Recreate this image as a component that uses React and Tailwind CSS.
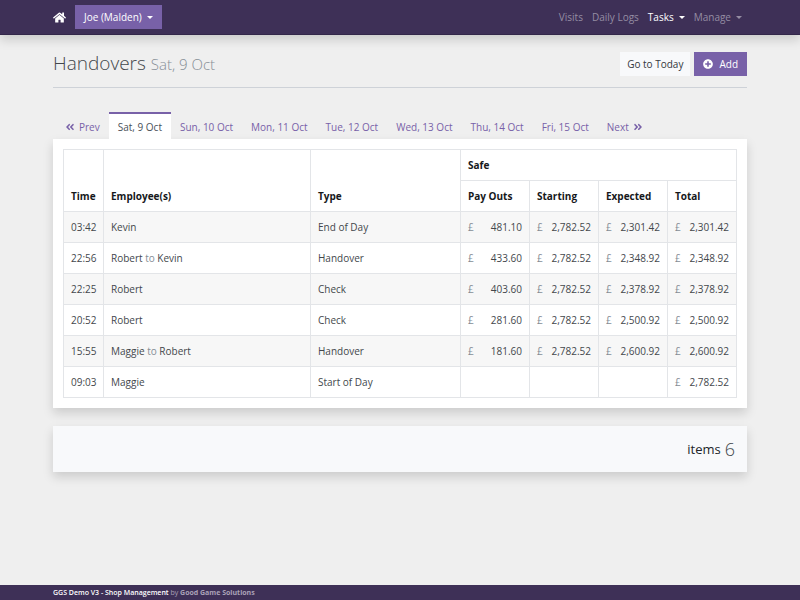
import React from 'react';
import { FaAngleDoubleLeft, FaAngleDoubleRight, FaHome, FaPlusCircle } from 'react-icons/fa';

const days = ['Sat, 9 Oct', 'Sun, 10 Oct', 'Mon, 11 Oct', 'Tue, 12 Oct', 'Wed, 13 Oct', 'Thu, 14 Oct', 'Fri, 15 Oct'];

const handovers = [
  { time: '03:42', from: 'Kevin', type: 'End of Day', safe: ['481.10', '2,782.52', '2,301.42', '2,301.42'] },
  { time: '22:56', from: 'Robert', to: 'Kevin', type: 'Handover', safe: ['433.60', '2,782.52', '2,348.92', '2,348.92'] },
  { time: '22:25', from: 'Robert', type: 'Check', safe: ['403.60', '2,782.52', '2,378.92', '2,378.92'] },
  { time: '20:52', from: 'Robert', type: 'Check', safe: ['281.60', '2,782.52', '2,500.92', '2,500.92'] },
  { time: '15:55', from: 'Maggie', to: 'Robert', type: 'Handover', safe: ['181.60', '2,782.52', '2,600.92', '2,600.92'] },
  { time: '09:03', from: 'Maggie', type: 'Start of Day', safe: [null, null, null, '2,782.52'] },
];

const container = 'mx-auto w-full max-w-[694px]';
const cell = 'border border-[#e3e5e8] px-[7px]';

function Caret() {
  return (
    <svg className="h-[3px] w-[6px]" viewBox="0 0 6 3" fill="currentColor" aria-hidden="true">
      <path d="M0 0h6L3 3z" />
    </svg>
  );
}

function Navbar() {
  return (
    <header className="relative border-b border-[#33274a] bg-[#3e3057] shadow-[0_5px_10px_rgba(0,0,0,0.15)]">
      <nav className={`${container} flex h-[34px] items-center justify-between`}>
        <div className="flex items-center gap-[9px]">
          <a href="#home" aria-label="Home" className="text-white">
            <FaHome className="size-[13px]" />
          </a>
          <button type="button" className="flex h-6 items-center gap-[5px] bg-[#7861a8] px-[9px] text-white">
            Joe (Malden)
            <Caret />
          </button>
        </div>
        <div className="flex items-center gap-[9px] pr-[5px] text-[#958da3]">
          <a href="#visits">Visits</a>
          <a href="#logs">Daily Logs</a>
          <button type="button" className="flex items-center gap-[5px] font-medium text-white">
            Tasks
            <Caret />
          </button>
          <button type="button" className="flex items-center gap-[5px]">
            Manage
            <Caret />
          </button>
        </div>
      </nav>
    </header>
  );
}

function DayTabs() {
  return (
    <nav className="flex h-[27px] pl-[3px] text-[#7861a8]">
      <a href="#prev" className="flex items-center gap-1 px-[9px] pt-[2px]">
        <FaAngleDoubleLeft className="size-[10px]" />
        Prev
      </a>
      {days.map((day, index) => (
        <a
          key={day}
          href="#day"
          className={
            index === 0
              ? 'flex items-center border-t-2 border-[#7861a8] bg-white px-[9px] text-[#495057]'
              : 'flex items-center px-[9px] pt-[2px]'
          }
        >
          {day}
        </a>
      ))}
      <a href="#next" className="flex items-center gap-1 px-[9px] pt-[2px]">
        Next
        <FaAngleDoubleRight className="size-[10px]" />
      </a>
    </nav>
  );
}

function HandoverTable() {
  return (
    <table className="w-full table-fixed border-collapse text-left">
      <colgroup>
        <col className="w-10" />
        <col />
        <col className="w-[150px]" />
        <col className="w-[69px]" />
        <col className="w-[69px]" />
        <col className="w-[69px]" />
        <col className="w-[69px]" />
      </colgroup>
      <thead className="font-bold text-[#16181b]">
        <tr className="h-[31px]">
          <th rowSpan={2} className={`${cell} pb-[7px] align-bottom`}>Time</th>
          <th rowSpan={2} className={`${cell} pb-[7px] align-bottom`}>Employee(s)</th>
          <th rowSpan={2} className={`${cell} pb-[7px] align-bottom`}>Type</th>
          <th colSpan={4} className={cell}>Safe</th>
        </tr>
        <tr className="h-[31px]">
          <th className={cell}>Pay Outs</th>
          <th className={cell}>Starting</th>
          <th className={cell}>Expected</th>
          <th className={cell}>Total</th>
        </tr>
      </thead>
      <tbody className="text-[#43474c]">
        {handovers.map((row) => (
          <tr key={row.time} className="h-[31px] odd:bg-[#f7f7f7]">
            <td className={cell}>{row.time}</td>
            <td className={cell}>
              {row.from}
              {row.to && (
                <>
                  <span className="text-[#868e96]"> to </span>
                  {row.to}
                </>
              )}
            </td>
            <td className={cell}>{row.type}</td>
            {row.safe.map((amount, index) => (
              <td key={index} className={cell}>
                {amount && (
                  <div className="flex justify-between">
                    <span className="text-[#868e96]">£</span>
                    <span>{amount}</span>
                  </div>
                )}
              </td>
            ))}
          </tr>
        ))}
      </tbody>
    </table>
  );
}

export default function App() {
  return (
    <div className="flex min-h-screen flex-col bg-[#efefef] font-['Open_Sans','Noto_Sans',sans-serif] text-[10px] leading-4 text-[#43474c]">
      <Navbar />
      <main className={`${container} flex-1`}>
        <div className="flex items-center justify-between border-b border-[#ced2d8] pt-4 pb-[10px]">
          <h1 className="text-[19px] leading-[25px] font-light">
            Handovers <small className="text-[15px] text-[#868e96]">Sat, 9 Oct</small>
          </h1>
          <div className="flex gap-1">
            <button type="button" className="h-6 bg-[#f8f9fb] px-[7px] text-[#33373b]">
              Go to Today
            </button>
            <button type="button" className="flex h-6 items-center gap-[6px] bg-[#7861a8] px-[9px] text-white">
              <FaPlusCircle className="size-[10px]" />
              Add
            </button>
          </div>
        </div>

        <div className="mt-6">
          <DayTabs />
          <section className="bg-white p-[10px] shadow-[0_5px_10px_rgba(0,0,0,0.15)]">
            <HandoverTable />
          </section>
        </div>

        <section className="mt-[18px] flex h-[46px] items-center justify-end gap-1 bg-[#f8f9fb] px-3 shadow-[0_5px_10px_rgba(0,0,0,0.15)]">
          <span className="text-[13px] text-[#212529]">items</span>
          <span className="text-[18px] font-light">6</span>
        </section>
      </main>
      <footer className="bg-[#3e3057] text-[7px] leading-[15px] text-[#aaa2b8]">
        <div className={container}>
          <span className="font-semibold text-white">GGS Demo V3 - Shop Management</span> by{' '}
          <a href="#ggs" className="font-bold">Good Game Solutions</a>
        </div>
      </footer>
    </div>
  );
}
